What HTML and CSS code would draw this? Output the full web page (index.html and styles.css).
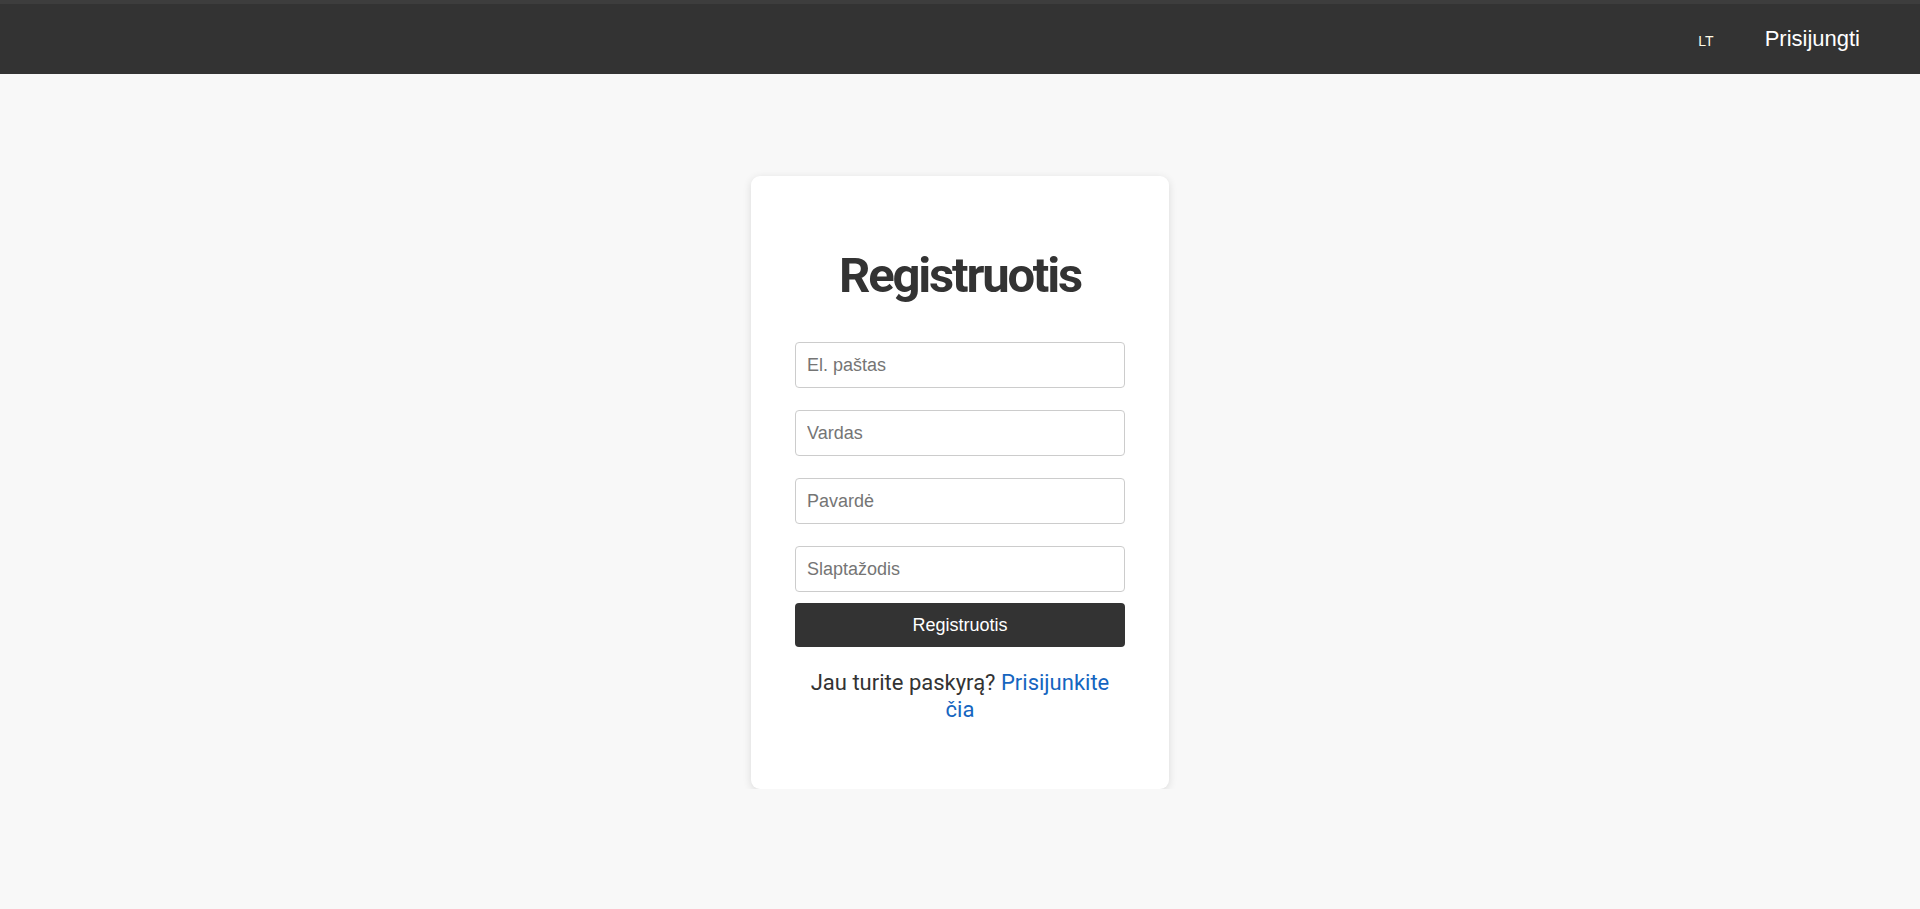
FILE: index.html
```html
<!DOCTYPE html>
<html lang="lt">
<head>
<meta charset="utf-8">
<title>Registruotis</title>
<link rel="stylesheet" href="styles.css">
</head>
<body>
<header class="topbar">
  <nav class="nav">
    <span class="lang">LT</span>
    <a class="nav-link" href="#">Prisijungti</a>
  </nav>
</header>
<main class="main">
  <section class="card">
    <h1 class="title">Registruotis</h1>
    <form class="form">
      <input class="field" type="email" placeholder="El. paštas">
      <input class="field" type="text" placeholder="Vardas">
      <input class="field" type="text" placeholder="Pavardė">
      <input class="field" type="password" placeholder="Slaptažodis">
      <button class="submit" type="button">Registruotis</button>
    </form>
    <p class="alt">Jau turite paskyrą? <a class="alt-link" href="#">Prisijunkite čia</a></p>
  </section>
</main>
</body>
</html>
```
FILE: styles.css
```css
html, body {
  margin: 0;
  padding: 0;
}
body {
  background: #f8f8f8;
  font-family: "Liberation Sans", Arial, sans-serif;
  color: #333;
}
.topbar {
  height: 70px;
  background: #333333;
  border-top: 4px solid #3d3d3d;
  display: flex;
  align-items: center;
  justify-content: flex-end;
  padding: 0 60px;
}
.nav {
  display: flex;
  align-items: center;
  gap: 51px;
}
.lang {
  font-size: 14px;
  color: #fffbe8;
  padding-top: 3px;
}
.nav-link {
  font-size: 22px;
  color: #ffffff;
  text-decoration: none;
}
.main {
  display: flex;
  justify-content: center;
  padding-top: 102px;
}
.card {
  width: 330px;
  padding: 40px 44px 40px;
  background: #ffffff;
  border-radius: 9px;
  box-shadow: 0 2px 8px rgba(0, 0, 0, 0.12);
  text-align: center;
  font-family: Roboto, "Liberation Sans", sans-serif;
}
.title {
  font-family: Roboto, sans-serif;
  font-weight: 700;
  font-size: 49px;
  letter-spacing: -2.2px;
  line-height: 56px;
  margin: 32px 0 38px;
  color: #333;
}
.form {
  display: flex;
  flex-direction: column;
}
.field {
  box-sizing: border-box;
  height: 46px;
  width: 100%;
  margin: 0 0 22px;
  padding: 0 11px;
  border: 1px solid #cccccc;
  border-radius: 4px;
  font-family: "Liberation Sans", Arial, sans-serif;
  font-size: 18px;
  color: #333;
  background: #fff;
}
.field:last-of-type {
  margin-bottom: 11px;
}
.field::placeholder {
  color: #757575;
}
.submit {
  height: 44px;
  width: 100%;
  border: none;
  border-radius: 4px;
  background: #333333;
  color: #ffffff;
  font-family: "Liberation Sans", Arial, sans-serif;
  font-size: 18px;
}
.alt {
  margin: 22px 0 26px;
  font-size: 22px;
  line-height: 27px;
  color: #333;
}
.alt-link {
  color: #1565c0;
  text-decoration: none;
}
```
